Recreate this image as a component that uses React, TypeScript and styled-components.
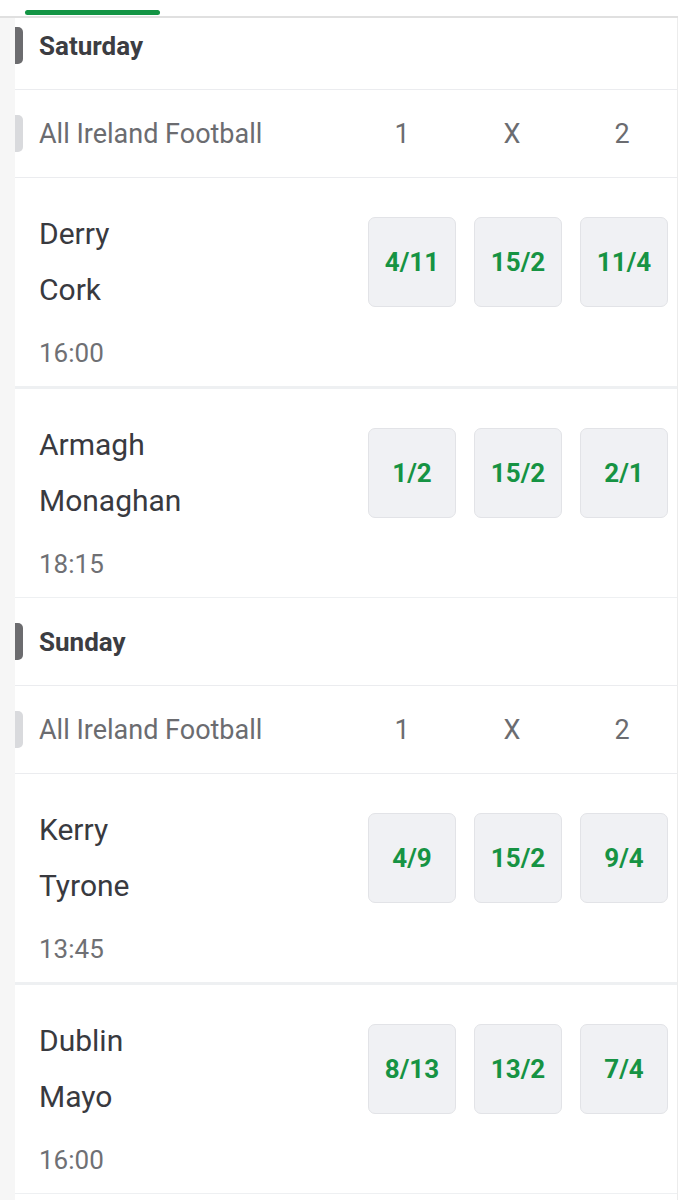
import { FC } from "react";
import styled, { createGlobalStyle } from "styled-components";

const GlobalStyle = createGlobalStyle`
  body {
    margin: 0;
    background: #f6f6f6;
    font-family: Roboto, "Liberation Sans", sans-serif;
  }
  * {
    box-sizing: border-box;
  }
`;

const Page = styled.div`
  width: 678px;
`;

const TabBar = styled.div`
  height: 18px;
  background: #fff;
  border-bottom: 2px solid #e0e0e0;
  padding-top: 10px;
`;

const TabIndicator = styled.div`
  margin-left: 25px;
  width: 135px;
  height: 5px;
  border-radius: 3px;
  background: #139444;
`;

const Content = styled.div`
  margin-left: 15px;
  min-height: 1182px;
  background: #fff;
  border-right: 1px solid #ececec;
`;

const Marker = styled.div<{ $tone: "dark" | "light" }>`
  width: 8px;
  height: 37px;
  flex-shrink: 0;
  border-radius: 0 5px 5px 0;
  background: ${(p) => (p.$tone === "dark" ? "#6c6c6f" : "#d9dadd")};
`;

const DayHeader = styled.div<{ $first?: boolean }>`
  display: flex;
  align-items: center;
  padding: ${(p) => (p.$first ? "9px" : "25px")} 0 25px;
  border-bottom: 1px solid #ebecef;
`;

const DayTitle = styled.div`
  margin-left: 16px;
  font-size: 26px;
  font-weight: 700;
  color: #3c3d42;
`;

const LeagueRow = styled.div`
  display: flex;
  align-items: center;
  padding: 25px 0;
  border-bottom: 1px solid #ebecef;
`;

const LeagueName = styled.div`
  flex: 1;
  margin-left: 16px;
  font-size: 27px;
  color: #6b6c70;
`;

const Labels = styled.div`
  display: grid;
  grid-template-columns: repeat(3, 110px);
`;

const Label = styled.div`
  text-align: center;
  font-size: 27px;
  color: #6b6c70;
`;

const MatchRow = styled.div<{ $last?: boolean }>`
  display: flex;
  padding: 28px 9px 5px 24px;
  border-bottom: ${(p) => (p.$last ? "1px" : "3px")} solid #eef0f2;
`;

const Teams = styled.div`
  flex: 1;
  display: flex;
  flex-direction: column;
`;

const Team = styled.div`
  line-height: 56px;
  font-size: 30px;
  color: #393a3f;
`;

const Time = styled.div`
  margin-top: 7px;
  line-height: 56px;
  font-size: 26px;
  color: #6f7074;
`;

const Odds = styled.div`
  display: flex;
  gap: 18px;
  margin-top: 11px;
`;

const OddButton = styled.div`
  width: 88px;
  height: 90px;
  display: flex;
  align-items: center;
  justify-content: center;
  background: #f0f1f4;
  border: 1px solid #e2e3e7;
  border-radius: 7px;
  font-size: 26px;
  font-weight: 700;
  color: #169343;
`;

type Match = { home: string; away: string; time: string; odds: string[] };
type Day = { name: string; matches: Match[] };

const days: Day[] = [
  {
    name: "Saturday",
    matches: [
      { home: "Derry", away: "Cork", time: "16:00", odds: ["4/11", "15/2", "11/4"] },
      { home: "Armagh", away: "Monaghan", time: "18:15", odds: ["1/2", "15/2", "2/1"] },
    ],
  },
  {
    name: "Sunday",
    matches: [
      { home: "Kerry", away: "Tyrone", time: "13:45", odds: ["4/9", "15/2", "9/4"] },
      { home: "Dublin", away: "Mayo", time: "16:00", odds: ["8/13", "13/2", "7/4"] },
    ],
  },
];

const App: FC = () => {
  return (
    <Page>
      <GlobalStyle />
      <TabBar>
        <TabIndicator />
      </TabBar>
      <Content>
        {days.map((day, di) => (
          <div key={day.name}>
            <DayHeader $first={di === 0}>
              <Marker $tone="dark" />
              <DayTitle>{day.name}</DayTitle>
            </DayHeader>
            <LeagueRow>
              <Marker $tone="light" />
              <LeagueName>All Ireland Football</LeagueName>
              <Labels>
                <Label>1</Label>
                <Label>X</Label>
                <Label>2</Label>
              </Labels>
            </LeagueRow>
            {day.matches.map((m, mi) => (
              <MatchRow key={m.home} $last={mi === day.matches.length - 1}>
                <Teams>
                  <Team>{m.home}</Team>
                  <Team>{m.away}</Team>
                  <Time>{m.time}</Time>
                </Teams>
                <Odds>
                  {m.odds.map((o, oi) => (
                    <OddButton key={oi}>{o}</OddButton>
                  ))}
                </Odds>
              </MatchRow>
            ))}
          </div>
        ))}
      </Content>
    </Page>
  );
};

export default App;
